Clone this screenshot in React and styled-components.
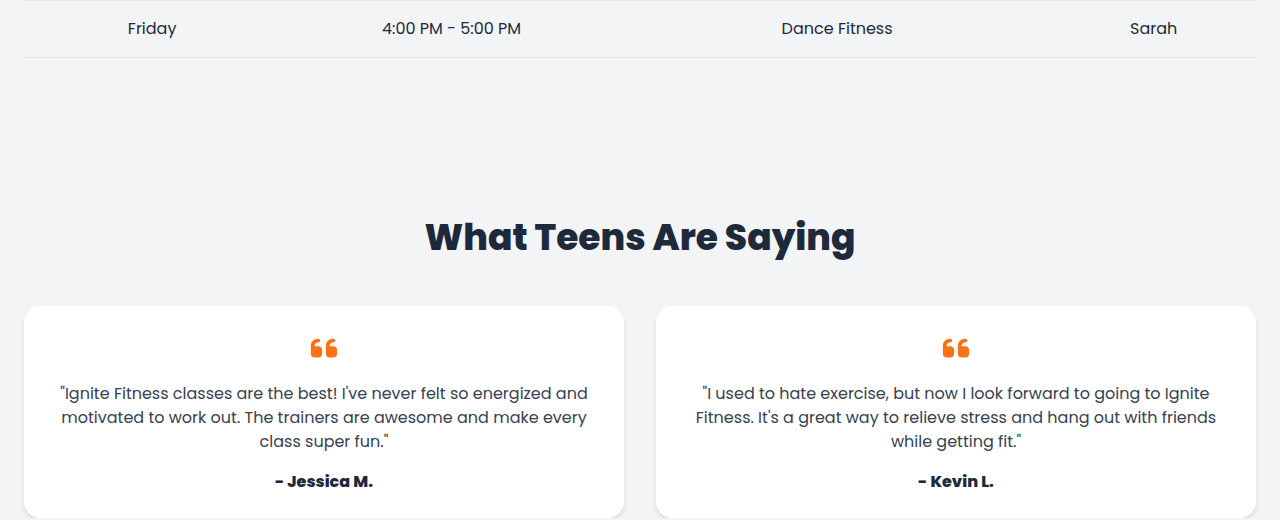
import React from "react";
import styled, { createGlobalStyle } from "styled-components";
import { FaQuoteLeft } from "react-icons/fa6";

const GlobalStyle = createGlobalStyle`
  *, *::before, *::after { box-sizing: border-box; }
  body {
    margin: 0;
    background: #f3f4f6;
    color: #1e293b;
    font-family: Poppins, Inter, "Liberation Sans", sans-serif;
    font-size: 16px;
    line-height: 24px;
  }
`;

const Schedule = styled.section`
  padding: 0 24px 80px;
`;

const ScheduleTable = styled.table`
  width: 100%;
  table-layout: fixed;
  border-collapse: separate;
  border-spacing: 0;
  border-top: 1px solid #e5e7eb;
`;

const Column = styled.col`
  width: ${({ $share }) => $share}%;
`;

const Cell = styled.td`
  padding: 16px 24px;
  border-bottom: 1px solid #e5e7eb;
  text-align: center;
`;

const Testimonials = styled.section`
  padding: 80px 24px 0;
`;

const Heading = styled.h2`
  margin: 0 0 48px;
  font-size: 36px;
  font-weight: 800;
  line-height: 40px;
  text-align: center;
`;

const CardGrid = styled.div`
  display: grid;
  grid-template-columns: repeat(2, minmax(0, 1fr));
  gap: 32px;
`;

const Card = styled.figure`
  margin: 0;
  padding: 24px;
  border-radius: 16px;
  background: #fff;
  box-shadow: 0 4px 6px -1px rgba(0, 0, 0, 0.1), 0 2px 4px -2px rgba(0, 0, 0, 0.1);
  text-align: center;
`;

const QuoteMark = styled.div`
  display: flex;
  align-items: center;
  justify-content: center;
  height: 36px;
  margin-bottom: 16px;
  color: #f97316;
  font-size: 30px;
`;

const Quote = styled.blockquote`
  margin: 0 0 16px;
  color: #374151;
`;

const Author = styled.figcaption`
  font-weight: 800;
`;

const columnShares = [20.8, 27.8, 34.8, 16.6];

const sessions = [["Friday", "4:00 PM - 5:00 PM", "Dance Fitness", "Sarah"]];

const testimonials = [
  {
    author: "Jessica M.",
    quote:
      "Ignite Fitness classes are the best! I've never felt so energized and motivated to work out. The trainers are awesome and make every class super fun.",
  },
  {
    author: "Kevin L.",
    quote:
      "I used to hate exercise, but now I look forward to going to Ignite Fitness. It's a great way to relieve stress and hang out with friends while getting fit.",
  },
];

export default function App() {
  return (
    <>
      <GlobalStyle />
      <main>
        <Schedule>
          <ScheduleTable>
            <colgroup>
              {columnShares.map((share) => (
                <Column key={share} $share={share} />
              ))}
            </colgroup>
            <tbody>
              {sessions.map((session) => (
                <tr key={session[0]}>
                  {session.map((value) => (
                    <Cell key={value}>{value}</Cell>
                  ))}
                </tr>
              ))}
            </tbody>
          </ScheduleTable>
        </Schedule>
        <Testimonials>
          <Heading>What Teens Are Saying</Heading>
          <CardGrid>
            {testimonials.map(({ author, quote }) => (
              <Card key={author}>
                <QuoteMark>
                  <FaQuoteLeft aria-hidden="true" />
                </QuoteMark>
                <Quote>{`"${quote}"`}</Quote>
                <Author>{`- ${author}`}</Author>
              </Card>
            ))}
          </CardGrid>
        </Testimonials>
      </main>
    </>
  );
}
